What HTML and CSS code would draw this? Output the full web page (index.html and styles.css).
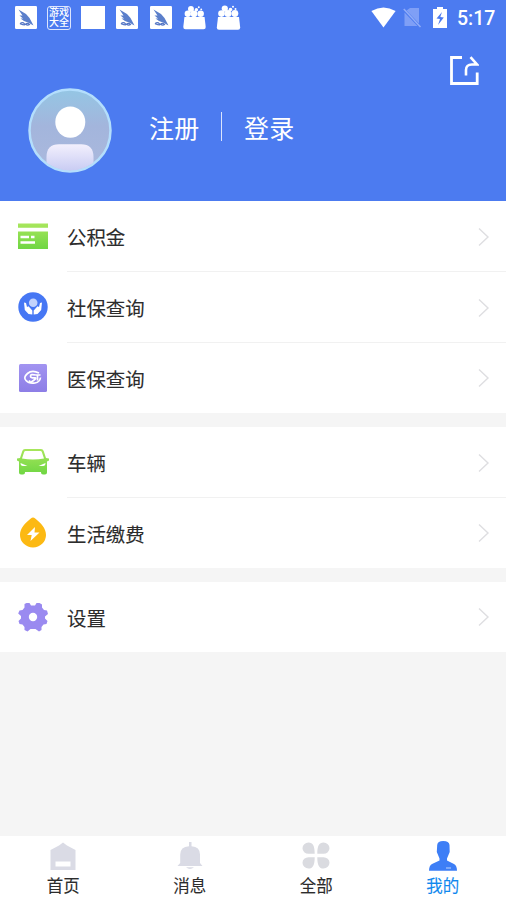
FILE: index.html
```html
<!DOCTYPE html>
<html lang="zh-CN">
<head>
<meta charset="utf-8">
<title>我的</title>
<link rel="stylesheet" href="styles.css">
</head>
<body>
<svg class="defs" width="0" height="0" aria-hidden="true">
  <defs>
    <linearGradient id="green" x1="0" y1="0" x2="0" y2="1"><stop stop-color="#a8e65c"/><stop offset="1" stop-color="#6fd643"/></linearGradient>
    <linearGradient id="violet" x1="0" y1="0" x2="0" y2="1"><stop stop-color="#a294f1"/><stop offset="1" stop-color="#8d7ee6"/></linearGradient>
    <linearGradient id="face" x1="0" y1="0" x2="0" y2="1"><stop stop-color="#94c6e4"/><stop offset=".45" stop-color="#a3b5dc"/><stop offset="1" stop-color="#abb9dd"/></linearGradient>
    <linearGradient id="torso" x1="0" y1="0" x2="0" y2="1"><stop stop-color="#f3f0fd"/><stop offset="1" stop-color="#c5c9f2"/></linearGradient>
    <clipPath id="disc"><circle cx="42" cy="42" r="39.5"/></clipPath>
    <symbol id="bird" viewBox="0 0 22 23"><rect width="22" height="23" rx="1.2" fill="#fff"/><path d="M3.500 3.500 11 8 14.500 12 18.500 19.500 13.500 16.800 9 15 5.500 12.500 8 12.500 4.500 9.500 7.500 9.500Z" fill="#5b7fcb"/><path d="M5 17.800q2.500-2.300 4.500 0t-4.500 0M10.500 18q2-1.500 4 .5-2 1.500-4-.5" fill="none" stroke="#5576c5" stroke-width="1.200"/></symbol>
    <symbol id="basket" viewBox="0 0 24 25"><path d="M1.500 12h21l1.200 10.500q0 2.300-2.200 2.300h-19Q.3 24.800.3 22.500Z" fill="#fff"/><g fill="#fff"><circle cx="5" cy="8.600" r="3.300"/><circle cx="11.500" cy="8.600" r="3.500"/><circle cx="18.400" cy="8.500" r="3.400"/><circle cx="8.300" cy="3.600" r="3.100"/><circle cx="14" cy="4.500" r="1.800"/><circle cx="16.500" cy="1.800" r="1"/><circle cx="19" cy="4" r="1"/></g></symbol>
    <symbol id="chevron" viewBox="0 0 12 20"><path d="M1 1.500 10 10 1 18.500" fill="none" stroke="#dedee1" stroke-width="1.400"/></symbol>
  </defs>
</svg>
<div class="screen">
  <header class="header">
    <div class="status">
      <div class="notices">
        <svg width="22" height="23"><use href="#bird"/></svg>
        <div class="game"><span>游戏</span><span>大全</span></div>
        <div class="blank"></div>
        <svg class="bird-b" width="22" height="23"><use href="#bird"/></svg>
        <svg class="bird-c" width="22" height="23"><use href="#bird"/></svg>
        <svg class="basket-a" width="23" height="25"><use href="#basket"/></svg>
        <svg class="basket-b" width="25" height="25"><use href="#basket"/></svg>
      </div>
      <div class="system">
        <svg width="25" height="21" viewBox="0 0 25 21"><path d="M.4 4Q12.500-3 24.600 4L12.500 20.500Z" fill="#fff"/></svg>
        <svg class="sim" width="19" height="21" viewBox="0 0 19 21"><path d="M7 1h9v15.500L3.500 3.500ZM1.500 5.500 14.500 19h-13Z" fill="#7f9ff6"/><path d="M.8 2 17.500 20" stroke="#91adf8" stroke-width="1.500"/></svg>
        <svg class="battery" width="14" height="21" viewBox="0 0 14 21"><path d="M4 0h6v2h4v19H0V2h4Z" fill="#fff"/><path d="M9 5 3.500 11.500 7 12 5 18 10.800 10.500 7.300 10Z" fill="#4c7bf0"/></svg>
        <span class="time">5:17</span>
      </div>
    </div>
    <div class="share"><svg width="29" height="29" viewBox="0 0 29 29"><path d="M12 1.500H1.500v26h25.700V16.500" fill="none" stroke="#fff" stroke-width="2.800"/><path d="M16 19.500V14q0-5.500 6-5.500h5L20.500 1.200" fill="none" stroke="#fff" stroke-width="2.600"/></svg></div>
    <div class="profile">
      <svg class="avatar" width="84" height="85" viewBox="0 0 84 84" preserveAspectRatio="none"><circle cx="42" cy="42" r="40.500" fill="url(#face)" stroke="#b4defc" stroke-width="2.500"/><ellipse cx="42.300" cy="33.700" rx="15" ry="15.500" fill="#fff"/><path clip-path="url(#disc)" d="M18.500 84V68Q18.500 55.500 31 55.500H53Q65.500 55.500 65.500 68V84Z" fill="url(#torso)"/></svg>
      <a class="auth">注册</a><i class="divider"></i><a class="auth">登录</a>
    </div>
  </header>
  <main>
    <section class="group">
      <div class="row"><div class="icon"><svg width="30" height="26" viewBox="0 0 30 26"><path d="M0 .5h30v4.200H0ZM0 8.500h30V26H0Z" fill="url(#green)"/><path d="M2.500 14h8.500M13 14h3.500M2.500 19.500H17" stroke="#fff" stroke-width="2.400"/></svg></div><span>公积金</span><svg class="arrow" width="12" height="20"><use href="#chevron"/></svg></div>
      <div class="row"><div class="icon"><svg width="30" height="30" viewBox="0 0 30 30"><circle cx="15" cy="15" r="14.700" fill="#4677f4"/><circle cx="15.200" cy="10.800" r="4.300" fill="#c3d3fc"/><path d="M6 10.500 8 11 9 15 10.500 14.200 14.300 18.500V22.500L10.500 22 6.800 18ZM24 10.500 22 11 21 15 19.500 14.200 15.700 18.500V22.500L19.500 22 23.200 18Z" fill="#fff"/></svg></div><span>社保查询</span><svg class="arrow" width="12" height="20"><use href="#chevron"/></svg></div>
      <div class="row"><div class="icon"><svg width="28" height="28" viewBox="0 0 28 28"><rect width="28" height="28" rx="1.500" fill="url(#violet)"/><g fill="none" stroke="#fff" stroke-width="1.700"><path d="M20 9Q13 5.500 8.500 9.500t-1.500 7Q10 20 16 19q5-1 5.500-5.500"/><path d="M16.500 11q-5-1.300-5 1t3.500 1.800-.5 2.700-4-.3M18.500 10.500v6M16.500 11h5"/></g></svg></div><span>医保查询</span><svg class="arrow" width="12" height="20"><use href="#chevron"/></svg></div>
    </section>
    <section class="group">
      <div class="row"><div class="icon"><svg width="32" height="26" viewBox="0 0 32 26"><path fill-rule="evenodd" d="M8 0h16q2 0 2.700 2L29 9l3 .500v2l-2 1v11q0 2-2 2h-2q-2 0-2-2V23H8v.500q0 2-2 2H4q-2 0-2-2v-11l-2-1v-2L3 9l2.300-7Q6 0 8 0ZM8.500 2q-1 0-1.400 1.200L5 9.500Q16 11.500 27 9.500l-2.100-6.300Q24.500 2 23.500 2ZM3.500 14q0 3 2.500 3h4.500ZM28.500 14q0 3-2.500 3H21.500Z" fill="url(#green)"/></svg></div><span>车辆</span><svg class="arrow" width="12" height="20"><use href="#chevron"/></svg></div>
      <div class="row"><div class="icon"><svg width="28" height="31" viewBox="0 0 28 31"><path d="M14 .500Q15 .500 16.500 1.800C22 6 27 11.500 27 18A13 12.500 0 0 1 1 18C1 11.500 6 6 11.500 1.800Q13 .500 14 .500Z" fill="#fcb913"/><path d="M16 10 8 18h4.700L11.500 24l9-8.500h-5Z" fill="#fff"/></svg></div><span>生活缴费</span><svg class="arrow" width="12" height="20"><use href="#chevron"/></svg></div>
    </section>
    <section class="group">
      <div class="row"><div class="icon"><svg width="30" height="30" viewBox="0 0 30 30"><path d="M8.500 1H11.500L13 3.500H17L18.500 1H21.500L24 2.500V5.500L26 8L29 8.500L30 12L27 14.500V16.500L29.500 19L28.500 22L25.500 22.500L23.500 25V28L21 29.500L17.500 27H12.500L9.500 29.500L6.500 28V25L4.500 22.500L1.500 22L.5 19L3 16.500V14L.2 11.500L1.500 8.500L4.500 8L6.500 5.500V2Z" fill="#9a8af0"/><circle cx="15" cy="15" r="4.200" fill="#fff"/></svg></div><span>设置</span><svg class="arrow" width="12" height="20"><use href="#chevron"/></svg></div>
    </section>
  </main>
  <nav class="tabs">
    <a class="tab"><svg width="26" height="30" viewBox="0 0 26 30"><path fill-rule="evenodd" d="M13 1.500 17 4.500 25.500 9V29H.5V9L9 4.500ZM5.500 20.500V25.500H20.500V20.500Z" fill="#dadbe5"/></svg><span>首页</span></a>
    <a class="tab"><svg width="26" height="30" viewBox="0 0 26 30"><path d="M12 1h2.500v4.200Q23 5.800 23 13.500V22l2.500 3H.5L3.200 22v-8.500Q3.200 5.800 12 5.200ZM9 26.200h8q-4 3.600-8 0Z" fill="#dadbe5"/></svg><span>消息</span></a>
    <a class="tab"><svg width="28" height="30" viewBox="0 0 28 30"><path d="M6.500 1.500C11 1.500 12.700 5 12.700 12.800H6.500A6 5.650 0 0 1 6.500 1.500ZM21.500 1.500C17 1.500 15.300 5 15.300 12.800H21.500A6 5.650 0 0 0 21.500 1.500ZM6.500 27.500C11 27.500 12.700 24 12.700 16.200H6.500A6 5.650 0 0 0 6.500 27.500ZM21.500 27.500C17 27.500 15.300 24 15.300 16.200H21.500A6 5.650 0 0 1 21.500 27.500Z" fill="#dadbe0"/></svg><span>全部</span></a>
    <a class="tab active"><svg width="28" height="30" viewBox="0 0 28 30"><path d="M8.200 4Q8.500 0 14.300 0T20.500 4L20.700 11 18 17.500V19.500L25 23Q28 24.500 28 29.800H0Q0 24.500 3 23L10.500 19.500V17.500L7.800 11Z" fill="#3d7ef6"/><path d="M17 27h5" stroke="#bcd2fc"/></svg><span>我的</span></a>
  </nav>
</div>
</body>
</html>
```

FILE: styles.css
```css
* { box-sizing: border-box; }
body { margin: 0; font-family: Roboto, "Noto Sans CJK SC", sans-serif; background: #f5f5f5; color: #2c2c2c; }
svg { display: block; flex: none; }
.defs { position: absolute; }
.screen { height: 900px; display: flex; flex-direction: column; overflow: hidden; }
.header { height: 201px; background: #4c7bf0; color: #fff; display: flex; flex-direction: column; flex: none; }
.status { height: 36px; display: flex; justify-content: space-between; padding: 0 11px 0 15px; flex: none; }
.notices, .system { display: flex; align-items: center; }
.notices { height: 35px; }
.game { width: 24px; height: 24px; margin-left: 10px; border: 1px solid #dce5fd; border-radius: 3px; display: flex; flex-direction: column; align-items: center; justify-content: center; font-size: 10px; line-height: 10px; font-weight: 500; }
.game span { white-space: nowrap; }
.blank { width: 24px; height: 23px; background: #fff; margin-left: 10px; }
.bird-b { margin-left: 11px; }
.bird-c { margin-left: 12px; }
.basket-a { margin-left: 11px; }
.basket-b { margin-left: 10px; }
.system { height: 35px; }
.sim { margin-left: 7px; }
.battery { margin-left: 11px; }
.time { font-size: 19.5px; font-weight: 500; line-height: 36px; width: 38px; margin-left: 10px; white-space: nowrap; padding-top: 3px; }
.share { height: 52px; padding: 20px 27px 0 0; display: flex; justify-content: flex-end; flex: none; }
.profile { height: 85px; padding-left: 28px; display: flex; align-items: center; }
.avatar { margin-right: 37px; }
.auth { font-size: 25px; line-height: 36px; width: 51px; letter-spacing: .3px; padding-bottom: 1px; white-space: nowrap; }
.divider { width: 1px; height: 29px; background: #dbe5fd; margin: 0 22px 8px 21px; }
.group { background: #fff; margin-bottom: 14px; }
.row { height: 71px; padding: 0 16px 0 16px; display: grid; grid-template-columns: 34px 1fr 12px; column-gap: 17px; align-items: center; font-size: 19.4px; line-height: 28px; background: linear-gradient(#f1f1f1, #f1f1f1) 67px 100% / 439px 1px no-repeat; }
.row:last-child { height: 70px; background: none; }
.icon { display: flex; justify-content: center; padding-bottom: 1px; }
.row > span { padding-top: 4px; -webkit-text-stroke: .1px; }
.row:last-child > span { padding-top: 5px; }
.tabs { margin-top: auto; height: 64px; background: #fff; display: grid; grid-template-columns: repeat(4, 1fr); flex: none; }
.tab { display: flex; flex-direction: column; align-items: center; padding-top: 5px; font-size: 16.5px; line-height: 24px; }
.tab span { margin-top: 4px; -webkit-text-stroke: .1px; }
.active { color: #0f88ee; }
```
